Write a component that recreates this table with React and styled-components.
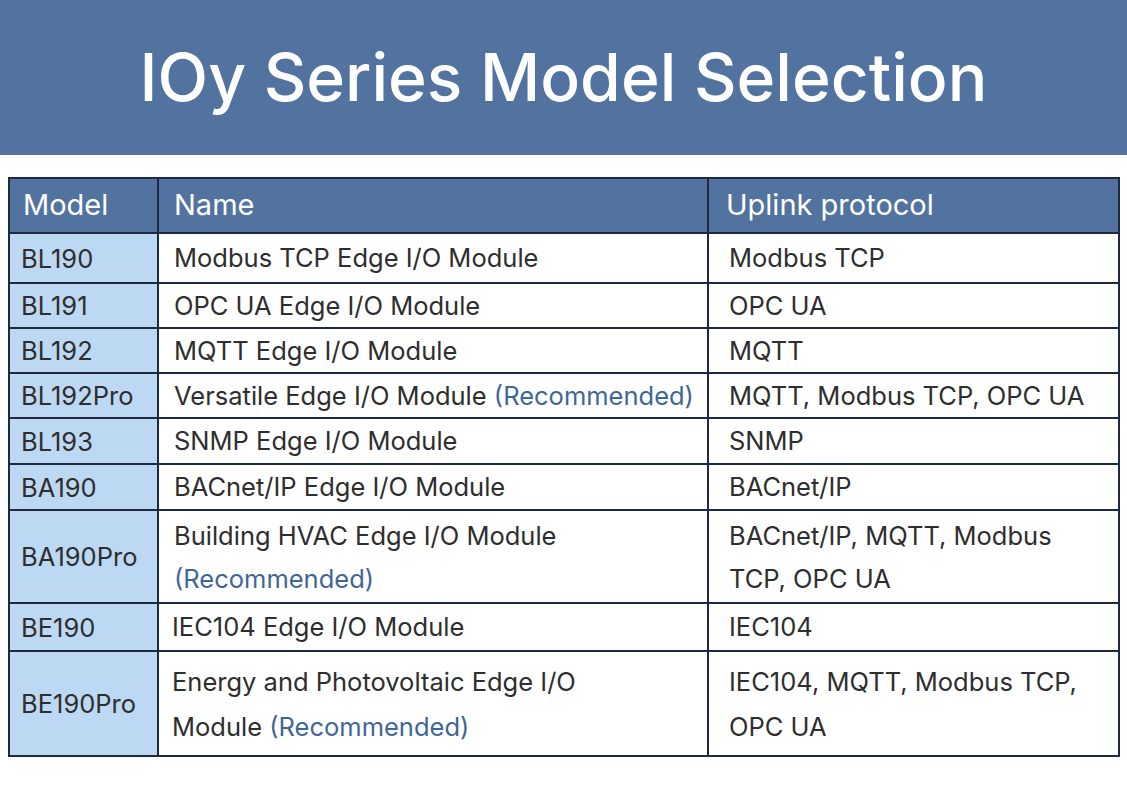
import React from "react";
import styled, { createGlobalStyle } from "styled-components";

const Global = createGlobalStyle`
  html, body { margin: 0; padding: 0; background: #ffffff; }
  body { font-family: Inter, "Noto Sans", "Liberation Sans", sans-serif; }
`;

const Page = styled.div`
  width: 1127px;
  height: 800px;
  background: #ffffff;
  display: flex;
  flex-direction: column;
`;

const Banner = styled.header`
  height: 155px;
  background: #5273a0;
  display: flex;
  align-items: center;
  justify-content: center;
`;

const Title = styled.h1`
  margin: 0;
  color: #ffffff;
  font-family: Inter, "Noto Sans", sans-serif;
  font-weight: 500;
  font-size: 66px;
  line-height: 1;
  padding-bottom: 2px;
`;

const TableWrap = styled.div`
  padding: 22px 9px 0 8px;
`;

const Table = styled.table`
  width: 1110px;
  border-collapse: collapse;
  table-layout: fixed;
  border: 2px solid #1d2a42;
`;

const HeadCell = styled.th`
  background: #5273a0;
  color: #ffffff;
  font-weight: 400;
  font-size: 29px;
  text-align: left;
  height: 50px;
  padding: 0 0 3px ${(p) => p.$pad}px;
  border: 2px solid #1d2a42;
`;

const ModelCell = styled.td`
  background: #bdd8f3;
  color: #2e2e2e;
  font-size: 25.5px;
  padding: 0 0 0 11px;
  border: 2px solid #1d2a42;
  height: ${(p) => p.$h}px;
`;

const Cell = styled.td`
  color: #2e2e2e;
  font-size: 25.5px;
  line-height: ${(p) => p.$lh || 30}px;
  padding: 0 6px 0 ${(p) => p.$pad}px;
  border: 2px solid #1d2a42;
  height: ${(p) => p.$h}px;
  white-space: nowrap;
`;

const Line = styled.div``;

const Rec = styled.span`
  color: #3f6698;
`;

const R = () => <Rec>(Recommended)</Rec>;

const rows = [
  { m: "BL190", n: ["Modbus TCP Edge I/O Module"], u: ["Modbus TCP"], h: 48 },
  { m: "BL191", n: ["OPC UA Edge I/O Module"], u: ["OPC UA"], h: 43 },
  { m: "BL192", n: ["MQTT Edge I/O Module"], u: ["MQTT"], h: 43 },
  { m: "BL192Pro", n: [<>Versatile Edge I/O Module <R /></>], u: ["MQTT, Modbus TCP, OPC UA"], h: 43 },
  { m: "BL193", n: ["SNMP Edge I/O Module"], u: ["SNMP"], h: 44 },
  { m: "BA190", n: ["BACnet/IP Edge I/O Module"], u: ["BACnet/IP"], h: 44 },
  { m: "BA190Pro", n: ["Building HVAC Edge I/O Module", <R />], u: ["BACnet/IP, MQTT, Modbus", "TCP, OPC UA"], h: 91, lh: 43 },
  { m: "BE190", n: ["IEC104 Edge I/O Module"], u: ["IEC104"], h: 46, pn: 13 },
  { m: "BE190Pro", n: ["Energy and Photovoltaic Edge I/O", <>Module <R /></>], u: ["IEC104, MQTT, Modbus TCP,", "OPC UA"], h: 103, lh: 45, pn: 13 },
];

export default function App() {
  return (
    <Page>
      <Global />
      <Banner>
        <Title>IOy Series Model Selection</Title>
      </Banner>
      <TableWrap>
        <Table>
          <colgroup>
            <col style={{ width: 149 }} />
            <col style={{ width: 550 }} />
            <col style={{ width: 411 }} />
          </colgroup>
          <thead>
            <tr>
              <HeadCell $pad={13}>Model</HeadCell>
              <HeadCell $pad={15}>Name</HeadCell>
              <HeadCell $pad={17}>Uplink protocol</HeadCell>
            </tr>
          </thead>
          <tbody>
            {rows.map((r) => (
              <tr key={r.m}>
                <ModelCell $h={r.h}>{r.m}</ModelCell>
                <Cell $h={r.h} $lh={r.lh} $pad={r.pn || 15}>
                  {r.n.map((l, i) => (
                    <Line key={i}>{l}</Line>
                  ))}
                </Cell>
                <Cell $h={r.h} $lh={r.lh} $pad={20}>
                  {r.u.map((l, i) => (
                    <Line key={i}>{l}</Line>
                  ))}
                </Cell>
              </tr>
            ))}
          </tbody>
        </Table>
      </TableWrap>
    </Page>
  );
}
